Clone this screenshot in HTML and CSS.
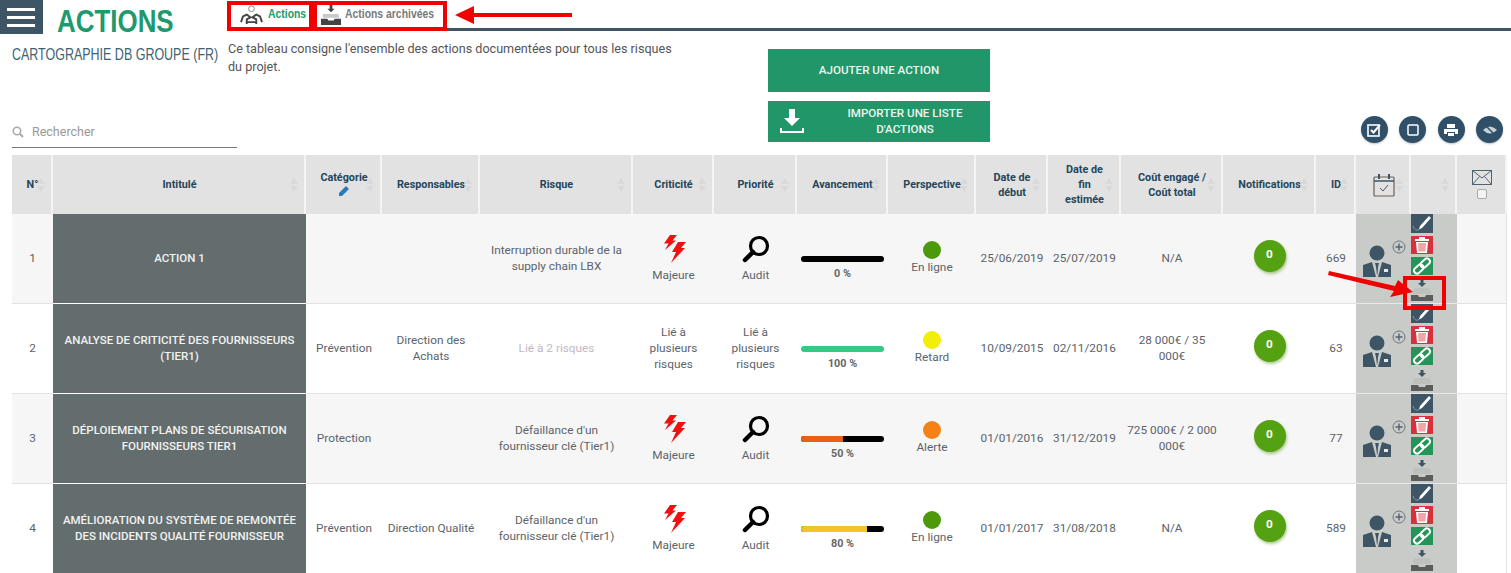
FILE: index.html
```html
<!DOCTYPE html>
<html lang="fr">
<head>
  <meta charset="UTF-8">
  <title>Actions</title>
  <link rel="stylesheet" href="styles.css">
</head>
<body>
  <svg class="defs" width="0" height="0">
    <symbol id="bolt" viewBox="0 0 24 28">
      <path fill="#f01010" d="M8 0 L15 0 L10.500 5.500 L14 5.500 L3 15 L6.500 8.500 L2 8.500 Z M16 7 L24 7 L19 13 L23 13 L9 28 L14 17 L10 17 Z"/>
    </symbol>
    <symbol id="loupe" viewBox="0 0 28 28">
      <circle cx="17" cy="11" r="8.500" fill="none" stroke="#000" stroke-width="3.2"/>
      <path d="M11 17 L3 25" stroke="#000" stroke-width="4.5" stroke-linecap="round"/>
    </symbol>
    <symbol id="person" viewBox="0 0 30 34">
      <circle cx="15" cy="9" r="7.5" fill="#3d5564"/>
      <path fill="#3d5564" d="M1 21 L10 18 L14 33 L1 33 Z M29 21 L20 18 L16 33 L29 33 Z M13 19 L17 19 L16 23 L15.500 30 L15 31 L14 23 Z"/>
      <rect x="22" y="25" width="4" height="3" fill="#e8e8e8"/>
    </symbol>
    <symbol id="plus" viewBox="0 0 14 14">
      <circle cx="7" cy="7" r="6" fill="none" stroke="#6b7780" stroke-width="1"/>
      <path d="M7 3.500 V10.500 M3.500 7 H10.500" stroke="#55636d" stroke-width="1.4"/>
    </symbol>
    <symbol id="inbox" viewBox="0 0 22 22">
      <path fill="#3d5564" d="M9.500 0 H12.500 V3 H15 L11 7 L7 3 H9.500 Z"/>
      <path fill="none" stroke="#b4b6b4" d="M3 9 H19 M2 11 H20 M2 13 H20"/>
      <path fill="#5c5c5c" d="M0 15 H7 L8 17 H14 L15 15 H22 V21 H0 Z"/>
    </symbol>
    <symbol id="pen" viewBox="0 0 22 19">
      <path fill="#fff" d="M18 2 L20 4 L11 14 L8 15.500 L9 12 Z"/>
      <path fill="none" stroke="#8d9aa3" d="M2 12 Q4 18 8 15.500"/>
    </symbol>
    <symbol id="trash" viewBox="0 0 22 18">
      <path fill="#fff" d="M4 3 H8 V1 H14 V3 H18 V5 H4 Z M5 6 H17 L16 17 H6 Z"/>
      <path fill="#f0a5ab" d="M7 7 H15 L14.500 15.500 H7.500 Z"/>
    </symbol>
    <symbol id="chain" viewBox="0 0 22 18">
      <g fill="none" stroke="#fff" stroke-width="2">
        <rect x="2.500" y="9" width="10.500" height="6" rx="3" transform="rotate(-42 7.750 12)"/>
        <rect x="9" y="3" width="10.500" height="6" rx="3" transform="rotate(-42 14.250 6)"/>
      </g>
    </symbol>
  </svg>

  <header class="topbar">
    <button class="burger"><span></span><span></span><span></span></button>
    <h1 class="page-title"><span>ACTIONS</span></h1>
    <nav class="tabs">
      <a class="tab tab-on">
        <svg width="23" height="20" viewBox="0 0 24 21"><circle cx="12" cy="4" r="3" fill="none" stroke="#888"/><path fill="none" stroke="#444" stroke-width="2" d="M1 18 L3 12 L7 10 L11 13 L7 15 L7 20 M23 18 L21 12 L17 10 L13 13 L17 15 L17 20 M8 18 H16"/></svg>
        <span>Actions</span>
      </a>
      <a class="tab tab-archive">
        <svg width="22" height="20" viewBox="0 0 22 22"><path fill="#444" d="M9.500 0 H12.500 V4 H15 L11 8 L7 4 H9.500 Z"/><path fill="#c9c9c9" d="M2 10 H19 L20 14 H2 Z"/><path fill="#444" d="M0 15 H7 L8 17 H14 L15 15 H22 V22 H0 Z"/></svg>
        <span>Actions archivées</span>
      </a>
    </nav>
    <div class="topbar-line"></div>
  </header>

  <section class="head">
    <div class="head-left">
      <div class="intro">
        <p class="project"><span>CARTOGRAPHIE DB GROUPE (FR)</span></p>
        <p class="intro-text">Ce tableau consigne l'ensemble des actions documentées pour tous les risques du projet.</p>
      </div>
      <label class="search">
        <svg width="12" height="12" viewBox="0 0 12 12"><circle cx="5" cy="5" r="3.7" fill="none" stroke="#aaa" stroke-width="1.6"/><path d="M8 8 L11 11" stroke="#aaa" stroke-width="2"/></svg>
        <span>Rechercher</span>
      </label>
    </div>
    <div class="head-btns">
      <a class="btn">AJOUTER UNE ACTION</a>
      <a class="btn btn-import">
        <svg width="26" height="26" viewBox="0 0 26 26"><path fill="#fff" d="M10 1 H16 V10 H21 L13 18 L5 10 H10 Z M1 20 H3 V23 H23 V20 H25 V25 H1 Z"/></svg>
        <span>IMPORTER UNE LISTE D'ACTIONS</span>
      </a>
    </div>
    <div class="round-btns">
      <a class="round"><svg width="14" height="14" viewBox="0 0 14 14"><rect x="1" y="2" width="11" height="11" fill="none" stroke="#fff" stroke-width="1.6"/><path d="M4 7 L6.500 9.500 L13 2" fill="none" stroke="#fff" stroke-width="2"/></svg></a>
      <a class="round"><svg width="14" height="14" viewBox="0 0 14 14"><rect x="2" y="2" width="10" height="10" rx="1" fill="none" stroke="#fff" stroke-width="1.5"/></svg></a>
      <a class="round"><svg width="14" height="14" viewBox="0 0 14 14"><path fill="#fff" d="M3 1 H11 V5 H3 Z M0 6 H14 V11 H11 V9 H3 V11 H0 Z M4 10 H10 V13 H4 Z"/></svg></a>
      <a class="round"><svg width="16" height="14" viewBox="0 0 16 14"><path fill="#c5d3db" d="M1 7 Q8 0 15 7 Q8 14 1 7 Z"/><path d="M3 2 L13 12" stroke="#2f5068" stroke-width="1.5"/></svg></a>
    </div>
  </section>

  <table class="grid">
    <colgroup>
      <col class="c1"><col class="c2"><col class="c3"><col class="c4"><col class="c5"><col class="c6"><col class="c7"><col class="c8"><col class="c9"><col class="c10"><col class="c11"><col class="c12"><col class="c13"><col class="c14"><col class="c15"><col class="c16"><col class="c17">
    </colgroup>
    <thead>
      <tr>
        <th class="sort">N°</th>
        <th class="sort">Intitulé</th>
        <th class="sort">Catégorie<br><svg width="10" height="10" viewBox="0 0 10 10"><path fill="#2a7ab8" d="M7 0 L10 3 L3 10 L0 10 L0 7 Z"/></svg></th>
        <th class="sort">Responsables</th>
        <th class="sort">Risque</th>
        <th class="sort">Criticité</th>
        <th class="sort">Priorité</th>
        <th class="sort">Avancement</th>
        <th class="sort">Perspective</th>
        <th class="sort">Date de début</th>
        <th class="sort">Date de fin estimée</th>
        <th class="sort">Coût engagé / Coût total</th>
        <th class="sort">Notifications</th>
        <th class="sort">ID</th>
        <th class="sort"><svg class="cal" width="22" height="24" viewBox="0 0 22 24"><rect x="1" y="4" width="20" height="19" rx="1" fill="none" stroke="#6b5f55" stroke-width="1.2"/><path d="M1 8 H21" stroke="#3d5564" stroke-width="1.5"/><path d="M6 1 V6 M16 1 V6" stroke="#3d5564" stroke-width="2"/><path d="M7 15 L10 18 L15 12" fill="none" stroke="#555"/></svg></th>
        <th class="sort"></th>
        <th class="mail-head"><svg width="20" height="15" viewBox="0 0 20 15"><rect x="0.5" y="0.5" width="19" height="14" fill="none" stroke="#4f6270"/><path d="M0.500 0.500 L10 8 L19.500 0.500 M0.500 14.500 L7.500 6.500 M19.500 14.500 L12.500 6.500" fill="none" stroke="#4f6270"/></svg><span class="check"></span></th>
      </tr>
    </thead>
    <tbody>
      <tr>
        <td>1</td>
        <td class="title-cell">ACTION 1</td>
        <td></td>
        <td class="tight"></td>
        <td>Interruption durable de la supply chain LBX</td>
        <td><svg class="ico" width="24" height="28"><use href="#bolt"/></svg><div>Majeure</div></td>
        <td><svg class="ico" width="28" height="28"><use href="#loupe"/></svg><div>Audit</div></td>
        <td><div class="bar"></div><div class="pct">0 %</div></td>
        <td><div class="status"><span class="dot dot-green"></span>En ligne</div></td>
        <td class="tight">25/06/2019</td>
        <td class="tight">25/07/2019</td>
        <td class="cost">N/A</td>
        <td><span class="notif">0</span></td>
        <td class="tight">669</td>
        <td class="grey-cell person-cell"><div class="person"><svg class="person-ico" width="30" height="34"><use href="#person"/></svg><svg width="14" height="14"><use href="#plus"/></svg></div></td>
        <td class="grey-cell act-cell">
          <div class="acts">
            <a class="act act-dark"><svg width="22" height="19"><use href="#pen"/></svg></a>
            <a class="act act-red"><svg width="22" height="18"><use href="#trash"/></svg></a>
            <a class="act act-green"><svg width="22" height="18"><use href="#chain"/></svg></a>
            <a class="act-archive"><svg width="22" height="22"><use href="#inbox"/></svg></a>
          </div>
        </td>
        <td class="last-cell"></td>
      </tr>
      <tr>
        <td>2</td>
        <td class="title-cell">ANALYSE DE CRITICITÉ DES FOURNISSEURS (TIER1)</td>
        <td>Prévention</td>
        <td class="tight">Direction des Achats</td>
        <td class="muted">Lié à 2 risques</td>
        <td>Lié à plusieurs risques</td>
        <td>Lié à plusieurs risques</td>
        <td><div class="bar"><i class="fill-green" style="width:100%"></i></div><div class="pct">100 %</div></td>
        <td><div class="status"><span class="dot dot-yellow"></span>Retard</div></td>
        <td class="tight">10/09/2015</td>
        <td class="tight">02/11/2016</td>
        <td class="cost">28 000€ / 35 000€</td>
        <td><span class="notif">0</span></td>
        <td class="tight">63</td>
        <td class="grey-cell person-cell"><div class="person"><svg class="person-ico" width="30" height="34"><use href="#person"/></svg><svg width="14" height="14"><use href="#plus"/></svg></div></td>
        <td class="grey-cell act-cell">
          <div class="acts">
            <a class="act act-dark"><svg width="22" height="19"><use href="#pen"/></svg></a>
            <a class="act act-red"><svg width="22" height="18"><use href="#trash"/></svg></a>
            <a class="act act-green"><svg width="22" height="18"><use href="#chain"/></svg></a>
            <a class="act-archive"><svg width="22" height="22"><use href="#inbox"/></svg></a>
          </div>
        </td>
        <td class="last-cell"></td>
      </tr>
      <tr>
        <td>3</td>
        <td class="title-cell">DÉPLOIEMENT PLANS DE SÉCURISATION FOURNISSEURS TIER1</td>
        <td>Protection</td>
        <td class="tight"></td>
        <td>Défaillance d'un fournisseur clé (Tier1)</td>
        <td><svg class="ico" width="24" height="28"><use href="#bolt"/></svg><div>Majeure</div></td>
        <td><svg class="ico" width="28" height="28"><use href="#loupe"/></svg><div>Audit</div></td>
        <td><div class="bar"><i class="fill-orange" style="width:50%"></i></div><div class="pct">50 %</div></td>
        <td><div class="status"><span class="dot dot-orange"></span>Alerte</div></td>
        <td class="tight">01/01/2016</td>
        <td class="tight">31/12/2019</td>
        <td class="cost">725 000€ / 2 000 000€</td>
        <td><span class="notif">0</span></td>
        <td class="tight">77</td>
        <td class="grey-cell person-cell"><div class="person"><svg class="person-ico" width="30" height="34"><use href="#person"/></svg><svg width="14" height="14"><use href="#plus"/></svg></div></td>
        <td class="grey-cell act-cell">
          <div class="acts">
            <a class="act act-dark"><svg width="22" height="19"><use href="#pen"/></svg></a>
            <a class="act act-red"><svg width="22" height="18"><use href="#trash"/></svg></a>
            <a class="act act-green"><svg width="22" height="18"><use href="#chain"/></svg></a>
            <a class="act-archive"><svg width="22" height="22"><use href="#inbox"/></svg></a>
          </div>
        </td>
        <td class="last-cell"></td>
      </tr>
      <tr>
        <td>4</td>
        <td class="title-cell">AMÉLIORATION DU SYSTÈME DE REMONTÉE DES INCIDENTS QUALITÉ FOURNISSEUR</td>
        <td>Prévention</td>
        <td class="tight">Direction Qualité</td>
        <td>Défaillance d'un fournisseur clé (Tier1)</td>
        <td><svg class="ico" width="24" height="28"><use href="#bolt"/></svg><div>Majeure</div></td>
        <td><svg class="ico" width="28" height="28"><use href="#loupe"/></svg><div>Audit</div></td>
        <td><div class="bar"><i class="fill-yellow" style="width:80%"></i></div><div class="pct">80 %</div></td>
        <td><div class="status"><span class="dot dot-green"></span>En ligne</div></td>
        <td class="tight">01/01/2017</td>
        <td class="tight">31/08/2018</td>
        <td class="cost">N/A</td>
        <td><span class="notif">0</span></td>
        <td class="tight">589</td>
        <td class="grey-cell person-cell"><div class="person"><svg class="person-ico" width="30" height="34"><use href="#person"/></svg><svg width="14" height="14"><use href="#plus"/></svg></div></td>
        <td class="grey-cell act-cell">
          <div class="acts">
            <a class="act act-dark"><svg width="22" height="19"><use href="#pen"/></svg></a>
            <a class="act act-red"><svg width="22" height="18"><use href="#trash"/></svg></a>
            <a class="act act-green"><svg width="22" height="18"><use href="#chain"/></svg></a>
            <a class="act-archive"><svg width="22" height="22"><use href="#inbox"/></svg></a>
          </div>
        </td>
        <td class="last-cell"></td>
      </tr>
    </tbody>
  </table>

  <!-- red annotations drawn over the screenshot -->
  <div class="mark mark-tab1"></div>
  <div class="mark mark-tab2"></div>
  <div class="mark mark-archive"></div>
  <svg class="arrow arrow-tabs" width="118" height="18" viewBox="0 0 118 18"><path fill="#f00000" d="M0 9 L19 0 L19 7 L117 7 L117 11 L19 11 L19 18 Z"/></svg>
  <svg class="arrow arrow-row" width="90" height="30" viewBox="0 0 90 30"><path fill="#f00000" d="M1 0 L67 15 L70 9 L85 21 L62 26 L66 20 L0 4 Z"/></svg>
</body>
</html>
```

FILE: styles.css
```css
html, body {
  height: 573px;
  overflow: hidden;
}
body {
  margin: 0;
  background: white;
  color: #4b5660;
  font-family: Roboto, "Liberation Sans", sans-serif;
  font-size: 12px;
  position: relative;
}
p {
  margin: 0;
}
.defs {
  position: absolute;
}

/* top bar */
.topbar {
  display: flex;
  align-items: flex-start;
  height: 34px;
}
.burger {
  width: 43px;
  height: 34px;
  padding: 8px 7px 0;
  border: none;
  background: #3d5564;
  display: flex;
  flex-direction: column;
  gap: 5px;
}
.burger span {
  display: block;
  width: 28px;
  height: 3px;
  background: white;
}
.page-title {
  margin: 4px 0 0 14px;
  width: 170px;
  font-family: "Liberation Sans", sans-serif;
  font-size: 32px;
  line-height: 34px;
  font-weight: bold;
  color: #209a6c;
}
.page-title span {
  display: inline-block;
  transform: scaleX(0.81);
  transform-origin: left;
}
.tabs {
  display: flex;
  height: 28px;
}
.tab {
  display: flex;
  align-items: flex-start;
  gap: 5px;
  box-sizing: border-box;
  width: 86px;
  height: 28px;
  padding: 6px 0 0 13px;
  font-family: "Liberation Sans", sans-serif;
  font-size: 13px;
  font-weight: bold;
  line-height: 16px;
  color: #77797c;
  white-space: nowrap;
}
.tab svg {
  flex: none;
  margin-top: -1px;
}
.tab span {
  display: inline-block;
  transform: scaleX(0.8);
  transform-origin: left;
}
.tab-on {
  color: #209a6c;
}
.tab-archive {
  width: 132px;
  padding-left: 7px;
}
.tab-archive svg {
  margin-right: -2px;
}
.topbar-line {
  flex: 1;
  height: 3px;
  margin-top: 28px;
  background: #3d5564;
}

/* intro, search, buttons */
.head {
  display: flex;
  height: 114px;
}
.head-left {
  display: flex;
  flex-direction: column;
  justify-content: space-between;
  box-sizing: border-box;
  width: 768px;
  padding-left: 12px;
}
.intro {
  display: flex;
}
.project {
  width: 216px;
  margin-top: 12px;
  font-family: "Liberation Sans", sans-serif;
  font-size: 16px;
  line-height: 18px;
  color: #3d6272;
  white-space: nowrap;
}
.project span {
  display: inline-block;
  transform: scaleX(0.78);
  transform-origin: left;
}
.intro-text {
  width: 450px;
  margin-top: 6px;
  font-size: 12.6px;
  line-height: 17.5px;
  color: #555;
}
.search {
  display: flex;
  align-items: center;
  gap: 8px;
  box-sizing: border-box;
  width: 225px;
  height: 23px;
  padding-bottom: 9px;
  border-bottom: 1px solid #777;
  font-size: 12.5px;
  color: #999;
}
.head-btns {
  display: flex;
  flex-direction: column;
  gap: 9px;
  width: 222px;
  padding-top: 15px;
}
.btn {
  display: flex;
  align-items: center;
  justify-content: center;
  box-sizing: border-box;
  width: 222px;
  height: 43px;
  padding-bottom: 1px;
  background: #209669;
  color: #eef5f0;
  font-size: 11.6px;
  font-weight: 500;
  text-align: center;
}
.btn-import {
  height: 41px;
  padding: 0 0 2px 11px;
  line-height: 16px;
}
.btn-import span {
  flex: 1;
  margin-left: 15px;
  padding: 0 20px;
}
.round-btns {
  display: flex;
  flex: 1;
  justify-content: flex-end;
  align-items: flex-end;
  gap: 11.5px;
  padding: 0 8px 5px 0;
}
.round {
  display: flex;
  align-items: center;
  justify-content: center;
  width: 27px;
  height: 27px;
  border-radius: 50%;
  background: #2f5068;
  box-shadow: 0 1px 2px rgba(0, 0, 0, 0.25);
}

/* table */
.grid {
  margin: 7px 0 0 12px;
  width: 1495px;
  table-layout: fixed;
  border-collapse: separate;
  border-spacing: 0;
}
.c1 { width: 41px; }
.c2 { width: 253px; }
.c3 { width: 76px; }
.c4 { width: 98px; }
.c5 { width: 153px; }
.c6 { width: 81px; }
.c7 { width: 83px; }
.c8 { width: 91px; }
.c9 { width: 88px; }
.c10 { width: 72px; }
.c11 { width: 73px; }
.c12 { width: 102px; }
.c13 { width: 93px; }
.c14 { width: 40px; }
.c15 { width: 55px; }
.c16 { width: 46px; }
.c17 { width: 50px; }
th {
  height: 59px;
  padding: 0 11px 0 13px;
  background: #e2e2e2;
  border-right: 2px solid #f4f4f4;
  color: #24465c;
  font-size: 10.8px;
  font-weight: bold;
  line-height: 15px;
  text-align: center;
  box-sizing: border-box;
  position: relative;
}
th svg {
  vertical-align: top;
  margin-top: 1px;
}
th.sort::before,
th.sort::after {
  content: "";
  position: absolute;
  right: 6px;
  border-left: 4px solid transparent;
  border-right: 4px solid transparent;
}
th.sort::before {
  top: 23px;
  border-bottom: 6px solid #d9d9d9;
}
th.sort::after {
  top: 31px;
  border-top: 6px solid #d9d9d9;
}
.mail-head svg {
  display: block;
  margin: 0 auto;
}
.check {
  display: block;
  width: 8px;
  height: 8px;
  margin: 4px auto 0;
  background: #f4f4f4;
  border: 1px solid #aaa;
  border-radius: 2px;
}
td {
  height: 90px;
  padding: 0 8px 1px;
  box-sizing: border-box;
  border-bottom: 1px solid #e2e2e2;
  text-align: center;
  font-size: 11.8px;
  line-height: 16px;
  color: #5c636b;
}
td.tight {
  padding-left: 2px;
  padding-right: 2px;
}
td.cost {
  padding-left: 4px;
  padding-right: 4px;
}
tbody tr:nth-child(odd) td {
  background: #f6f6f6;
}
tbody tr td.title-cell {
  padding: 0 4px 1px;
  background: #636d6d;
  border-bottom: 1px solid white;
  color: #f2f2f2;
  font-size: 11.5px;
  font-weight: 500;
}
td.muted {
  color: #c4b6c6;
}
tbody tr td.grey-cell {
  background: #c9cbc9;
  border-bottom: 1px solid #e8e8e8;
}
td.last-cell {
  border-right: 1px solid #e2e2e2;
}
td.person-cell {
  padding: 0 0 0 6px;
}
.person {
  display: flex;
  align-items: flex-start;
}
.person-ico {
  margin-top: 4px;
}
tbody tr td.act-cell {
  padding: 0;
  vertical-align: top;
  text-align: left;
}
.acts {
  width: 22px;
  display: flex;
  flex-direction: column;
  gap: 3px;
}
.act {
  display: flex;
  width: 22px;
  height: 18px;
}
.act-dark {
  height: 19px;
  background: #3d5564;
}
.act-red { background: #d9303e; }
.act-green { background: #259458; }
.act-archive {
  margin-top: 2px;
  height: 22px;
}
.ico {
  display: block;
  margin: 1px auto 4px;
}
.bar {
  height: 6px;
  margin: 22px -4px 0;
  border-radius: 3px;
  background: black;
  overflow: hidden;
}
.bar i {
  display: block;
  height: 6px;
}
.fill-green { background: #38c885; }
.fill-orange { background: #ea5f16; }
.fill-yellow { background: #f0c528; }
.pct {
  margin-top: 4px;
  font-size: 10.8px;
  font-weight: bold;
  color: #666;
}
.status {
  padding-bottom: 1px;
}
.dot {
  display: block;
  width: 18px;
  height: 18px;
  margin: 0 auto;
  border-radius: 50%;
}
.dot-green { background: #4c9a0c; }
.dot-yellow { background: #f2ee0a; }
.dot-orange { background: #f58216; }
.notif {
  display: block;
  width: 32px;
  height: 32px;
  margin: 0 auto 5px;
  border-radius: 50%;
  background: #54a212;
  color: white;
  font-weight: bold;
  line-height: 28px;
  box-shadow: 1px 2px 3px rgba(80, 140, 20, 0.45);
}

/* annotations */
.mark {
  position: absolute;
  box-sizing: border-box;
  border: 4px solid #f00000;
}
.mark-tab1 { left: 227px; top: 1px; width: 86px; height: 30px; }
.mark-tab2 { left: 313px; top: 1px; width: 134px; height: 30px; }
.mark-archive { left: 1403px; top: 276px; width: 43px; height: 34px; }
.arrow {
  position: absolute;
}
.arrow-tabs { left: 455px; top: 6px; }
.arrow-row { left: 1328px; top: 271px; }
```
